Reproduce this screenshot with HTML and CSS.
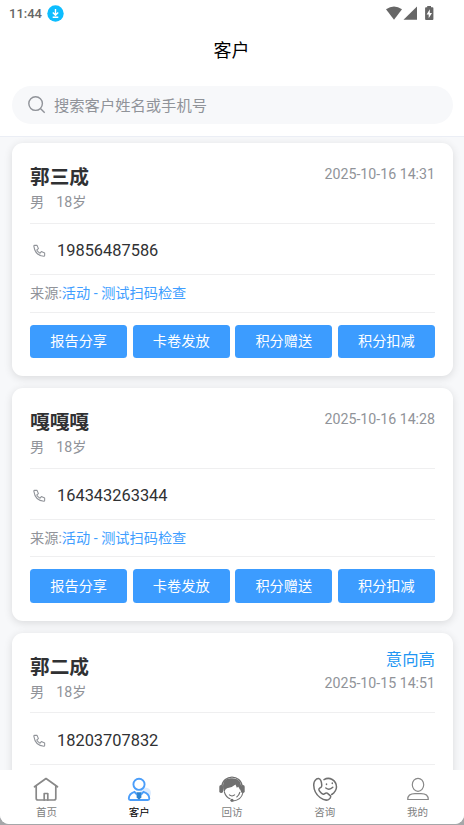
FILE: index.html
```html
<!DOCTYPE html>
<html lang="zh-CN">
<head>
<meta charset="utf-8">
<meta name="viewport" content="width=device-width, initial-scale=1">
<title>客户</title>
<link rel="stylesheet" href="styles.css">
</head>
<body>
<div class="app">
  <header class="top">
    <div class="status">
      <span class="time">11:44</span>
      <svg class="download" viewBox="0 0 17 17"><circle cx="8.5" cy="8.5" r="8.2" fill="#0dbdff"/><path d="M8.5 4v6M5.8 7.5l2.7 2.7 2.7-2.7M5.7 12.2h5.6" fill="none" stroke="#fff" stroke-width="1.4"/></svg>
      <svg class="signals" viewBox="0 0 50 16"><g fill="#666"><path d="M0 3.2Q8 -2.2 16 3.2L8 13.8z"/><path d="M31 .5v13.3H17.5z"/><path d="M41.2 0h3.8v1.3h1.5q.9 0 .9.9v10.8q0 .9-.9.9H40q-.9 0-.9-.9V2.2q0-.9.9-.9h1.2z"/></g><path d="M43.8 3.3l-3.2 5.2h2.1v3.7l3.3-5.3h-2.2z" fill="#fff"/></svg>
    </div>
    <h1>客户</h1>
    <div class="search">
      <svg viewBox="0 0 18 18"><circle cx="7.6" cy="7.6" r="6.800"/><path d="M12.400 12.400l4.300 4.300"/></svg>
      <span>搜索客户姓名或手机号</span>
    </div>
  </header>

  <main class="list">
    <article class="card">
      <div class="head">
        <div><h2>郭三成</h2><p class="meta"><span>男</span><span>18岁</span></p></div>
        <div class="side"><time>2025-10-16 14:31</time></div>
      </div>
      <div class="phone"><svg viewBox="0 0 24 24"><path d="M3 2.5h4.5l2.5 6-3 2.5q2 4 6 6l2.5-3 6 2.5V21q0 1.5-1.5 1.5Q4 21.500 1.500 4q0-1.500 1.500-1.500z"/></svg><span>19856487586</span></div>
      <div class="source">来源:<a>活动 - 测试扫码检查</a></div>
      <div class="actions"><button>报告分享</button><button>卡卷发放</button><button>积分赠送</button><button>积分扣减</button></div>
    </article>

    <article class="card">
      <div class="head">
        <div><h2>嘎嘎嘎</h2><p class="meta"><span>男</span><span>18岁</span></p></div>
        <div class="side"><time>2025-10-16 14:28</time></div>
      </div>
      <div class="phone"><svg viewBox="0 0 24 24"><path d="M3 2.5h4.5l2.5 6-3 2.5q2 4 6 6l2.5-3 6 2.5V21q0 1.5-1.5 1.5Q4 21.500 1.500 4q0-1.500 1.500-1.500z"/></svg><span>164343263344</span></div>
      <div class="source">来源:<a>活动 - 测试扫码检查</a></div>
      <div class="actions"><button>报告分享</button><button>卡卷发放</button><button>积分赠送</button><button>积分扣减</button></div>
    </article>

    <article class="card">
      <div class="head">
        <div><h2>郭二成</h2><p class="meta"><span>男</span><span>18岁</span></p></div>
        <div class="side tagged"><strong>意向高</strong><time>2025-10-15 14:51</time></div>
      </div>
      <div class="phone"><svg viewBox="0 0 24 24"><path d="M3 2.5h4.5l2.5 6-3 2.5q2 4 6 6l2.5-3 6 2.5V21q0 1.5-1.5 1.5Q4 21.500 1.500 4q0-1.500 1.500-1.500z"/></svg><span>18203707832</span></div>
    </article>
  </main>

  <nav class="tabs">
    <a class="tab">
      <svg viewBox="0 0 26 26"><g fill="none" stroke="#888" stroke-width="1.700" stroke-linejoin="round" stroke-linecap="round"><path d="M1.500 10.800L13 2.500l11.500 8.300M3.200 9.800v12.400q0 1.800 1.800 1.800h16q1.800 0 1.800-1.800V9.800"/><path d="M11.200 24v-6.500h3.600V24"/></g></svg>
      <span>首页</span>
    </a>
    <a class="tab active">
      <svg viewBox="0 0 26 26"><circle cx="19.500" cy="17" r="5.500" fill="#dcecff"/><g fill="#fff" stroke="#4b9efa" stroke-width="1.900" stroke-linejoin="round"><circle cx="13" cy="8.300" r="5.600"/><path d="M8.500 15.800Q3 17.500 2.800 22.500q0 1.500 1.500 1.500h17.500q1.500 0 1.500-1.500-.2-5-5.800-6.700L13 21z"/></g><path d="M10.300 16.300h5.400l-1 2 .9 3-2.600 2.500-2.600-2.500.9-3z" fill="#2d83cd"/></svg>
      <span>客户</span>
    </a>
    <a class="tab">
      <svg viewBox="0 0 26 26"><path d="M2.800 10.500C4-2 22-2 23.200 10.500" fill="none" stroke="#707070" stroke-width="1.400"/><path d="M4.500 14.500C2.500 3.500 8 2.300 13 2.300c6.500 0 10.500 3.700 8.700 12.700l-2.400-4.300-1.500 1-1.300-3.200q-3.500 3.300-8.500 3.700Q5.800 13 5.500 16.500z" fill="#707070"/><rect x=".3" y="9" width="3.800" height="8" rx="1.700" fill="#707070"/><rect x="21.900" y="9" width="3.800" height="8" rx="1.700" fill="#707070"/><path d="M5.300 16q1.700 5.500 6.200 7M21 16q-1 3.500-3.500 5.200M10 18.700q3 2.500 6 0M24 16.500q-1.700 7.700-10 8.500" fill="none" stroke="#707070" stroke-width="1.100"/><circle cx="13" cy="24.300" r="1.600" fill="#707070"/></svg>
      <span>回访</span>
    </a>
    <a class="tab">
      <svg viewBox="0 0 26 26"><g fill="none" stroke="#707070" stroke-width="1.500" stroke-linecap="round" stroke-linejoin="round"><path d="M4.500 3Q1.800 5 1.700 9q.3 8 6.300 12.500 5 3.800 8.500 2.100 2.800-1.600 2-3.700l-3.300-2.800q-1.200-.6-2.400.5-1.800 1.600-4.500-1.600Q6 13.500 7.500 12.200q2.500-1 2.300-2.800Q9.500 3 6.500 2.500 5.500 2.400 4.500 3z"/><path d="M12 3.600q4.200-2.400 8.200-.1 4.300 2.700 4.300 7.500-.2 4.500-4.800 7.500"/><path d="M14.500 8v.5M20.300 7v.5M13.800 12q3.500 2.700 7-.7"/></g></svg>
      <span>咨询</span>
    </a>
    <a class="tab">
      <svg viewBox="0 0 26 26"><g fill="none" stroke="#888" stroke-width="1.200" stroke-linejoin="round"><ellipse cx="13" cy="8.800" rx="5.700" ry="6.500"/><path d="M2.700 23.500q0-5.800 7.300-5.800h6q7.300 0 7.300 5.800z"/></g></svg>
      <span>我的</span>
    </a>
  </nav>
</div>
</body>
</html>
```
FILE: styles.css
```css
* { box-sizing: border-box; }
html, body { margin: 0; height: 100%; overflow: hidden; }
body {
  background: #a5a7a9;
  font-family: Roboto, "Noto Sans CJK SC", sans-serif;
  color: #303133;
}
h1, h2, p { margin: 0; }
svg { display: block; flex: none; }
.app {
  height: 824px;
  display: flex;
  flex-direction: column;
  overflow: hidden;
  background: #f7f8fa;
  border-radius: 0 0 9px 9px;
}
.top {
  flex: none;
  height: 137px;
  background: #fff;
  border-bottom: 1px solid #ebeef5;
}
.status {
  display: flex;
  align-items: center;
  height: 27px;
  padding: 0 30px 0 9px;
}
.time { font-size: 13px; font-weight: 500; line-height: 20px; color: #666; width: 38px; }
.download { width: 17px; height: 17px; }
.signals { width: 50px; height: 16px; margin-left: auto; margin-right: -2px; }
h1 {
  height: 46px;
  font-size: 18px;
  line-height: 47px;
  font-weight: 400;
  color: #000;
  text-align: center;
  padding-right: 1px;
}
.search {
  display: flex;
  align-items: center;
  gap: 8px;
  height: 38px;
  margin: 13px 11px 0 12px;
  padding: 0 16px;
  border-radius: 19px;
  background: #f7f8fa;
  color: #909399;
  font-size: 15.3px;
}
.search span { padding-bottom: 3px; }
.search svg { width: 18px; height: 18px; fill: none; stroke: #909399; stroke-width: 1.400; }
.list {
  flex: 1;
  min-height: 0;
  overflow: hidden;
  padding: 6.300px 11px 0 12px;
}
.card {
  height: 232.700px;
  margin-bottom: 12px;
  padding: 18px;
  background: #fff;
  border-radius: 11px;
  box-shadow: 0 2px 8px rgba(0, 0, 0, .12);
}
.head {
  display: flex;
  justify-content: space-between;
  height: 62.700px;
  border-bottom: 1px solid #efeff0;
}
h2 { height: 30px; font-size: 19.700px; line-height: 33px; font-weight: 700; }
.meta { display: flex; gap: 12px; font-size: 14.200px; line-height: 22px; color: #909399; }
.side { display: flex; flex-direction: column; align-items: flex-end; color: #909399; font-size: 14.200px; line-height: 26px; }
.tagged { line-height: 28px; }
.tagged strong { font-size: 16.400px; line-height: 18px; font-weight: 400; color: #2196f3; }
.phone {
  display: flex;
  align-items: center;
  height: 51.400px;
  padding: 3px 0 0 2.500px;
  gap: 11.500px;
  font-size: 16.400px;
  border-bottom: 1px solid #efeff0;
}
.phone svg { width: 13px; height: 13px; fill: none; stroke: #909399; stroke-width: 2; stroke-linejoin: round; }
.source {
  height: 37.400px;
  line-height: 36px;
  font-size: 14.200px;
  color: #909399;
  border-bottom: 1px solid #efeff0;
}
.source a { color: #409eff; }
.actions { display: grid; grid-template-columns: repeat(4, 1fr); gap: 5.300px; margin-top: 12px; }
button {
  height: 33.300px;
  padding: 0;
  border: 0;
  border-radius: 3.500px;
  background: #3c9cff;
  color: #fff;
  font: 14.200px/32px Roboto, "Noto Sans CJK SC", sans-serif;
}
.tabs {
  flex: none;
  display: flex;
  height: 54px;
  background: #fff;
}
.tab {
  flex: 1;
  display: flex;
  flex-direction: column;
  align-items: center;
  padding-top: 6px;
  font-size: 10.500px;
  line-height: 16px;
  color: #7d7e80;
}
.tab svg { width: 26px; height: 26px; margin-bottom: 3px; }
.tab.active { color: #000; }
```
